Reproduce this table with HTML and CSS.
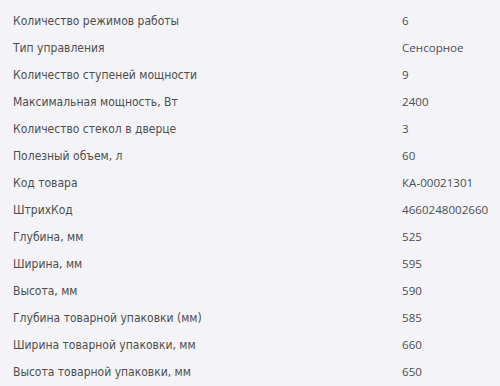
FILE: index.html
```html
<!DOCTYPE html>
<html lang="ru">
<head>
<meta charset="utf-8">
<link rel="stylesheet" href="styles.css">
</head>
<body>
<div class="specs">
  <div class="row"><span class="name">Количество режимов работы</span><span class="val">6</span></div>
  <div class="row"><span class="name">Тип управления</span><span class="val">Сенсорное</span></div>
  <div class="row"><span class="name">Количество ступеней мощности</span><span class="val">9</span></div>
  <div class="row"><span class="name">Максимальная мощность, Вт</span><span class="val">2400</span></div>
  <div class="row"><span class="name">Количество стекол в дверце</span><span class="val">3</span></div>
  <div class="row"><span class="name">Полезный объем, л</span><span class="val">60</span></div>
  <div class="row"><span class="name">Код товара</span><span class="val">КА-00021301</span></div>
  <div class="row"><span class="name">ШтрихКод</span><span class="val">4660248002660</span></div>
  <div class="row"><span class="name">Глубина, мм</span><span class="val">525</span></div>
  <div class="row"><span class="name">Ширина, мм</span><span class="val">595</span></div>
  <div class="row"><span class="name">Высота, мм</span><span class="val">590</span></div>
  <div class="row"><span class="name">Глубина товарной упаковки (мм)</span><span class="val">585</span></div>
  <div class="row"><span class="name">Ширина товарной упаковки, мм</span><span class="val">660</span></div>
  <div class="row"><span class="name">Высота товарной упаковки, мм</span><span class="val">650</span></div>
</div>
</body>
</html>
```
FILE: styles.css
```css
html, body {
  margin: 0;
  padding: 0;
  background: #f4f4f8;
}
.specs {
  padding: 7px 0 0 13px;
  color: #4d4d4d;
}
.row {
  display: grid;
  grid-template-columns: 389px 1fr;
  height: 27px;
  align-items: center;
}
.name {
  font-family: "DejaVu Sans Condensed", "DejaVu Sans", sans-serif;
  font-stretch: condensed;
  font-size: 12px;
}
.val {
  font-family: "Open Sans", sans-serif;
  font-size: 11.6px;
}
```
